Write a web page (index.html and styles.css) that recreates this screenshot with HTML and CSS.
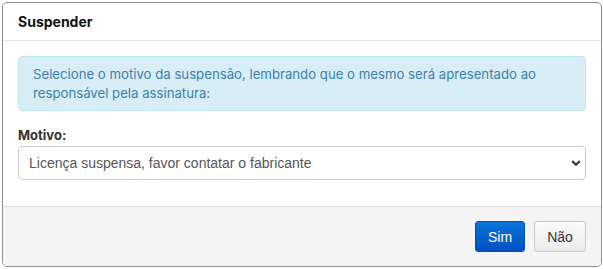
FILE: index.html
```html
<!DOCTYPE html>
<html lang="pt">
<head>
<meta charset="utf-8">
<link rel="stylesheet" href="styles.css">
</head>
<body>
<div class="modal">
  <div class="modal-header">
    <h4 class="modal-title">Suspender</h4>
  </div>
  <div class="modal-body">
    <div class="alert">Selecione o motivo da suspensão, lembrando que o mesmo será apresentado ao responsável pela assinatura:</div>
    <label class="label" for="motivo">Motivo:</label>
    <div class="select-wrap">
      <select id="motivo" class="select">
        <option>Licença suspensa, favor contatar o fabricante</option>
      </select>
      <svg class="chevron" width="10" height="8" viewBox="0 0 10 8"><path d="M1.2 2 L5 5.8 L8.8 2" fill="none" stroke="#333" stroke-width="2"/></svg>
    </div>
  </div>
  <div class="modal-footer">
    <button class="btn btn-primary">Sim</button>
    <button class="btn btn-default">Não</button>
  </div>
</div>
</body>
</html>
```
FILE: styles.css
```css
html, body { margin: 0; padding: 0; background: #fff; }
body { font-family: "Inter", "Noto Sans", sans-serif; }
.modal {
  margin: 2px;
  width: 600px;
  height: 265px;
  border: 1px solid #8f8f8f;
  border-radius: 5px;
  box-sizing: border-box;
  display: flex;
  flex-direction: column;
  overflow: hidden;
}
.modal-header {
  height: 37px;
  border-bottom: 1px solid #e8e8e8;
  padding: 0 15px;
  display: flex;
  align-items: center;
}
.modal-title {
  margin: 0;
  font-size: 14px;
  font-weight: 700;
  color: #111;
}
.modal-body {
  padding: 15px 15px 0;
  flex: 1;
}
.alert {
  background: #d9edf7;
  border: 1px solid #bce8f1;
  border-radius: 4px;
  color: #3a81ab;
  font-size: 13.2px;
  line-height: 19px;
  padding: 8px 14px 8px 14px;
  height: 55px;
  box-sizing: border-box;
}
.label {
  display: block;
  margin-top: 16px;
  font-weight: 700;
  font-size: 13px;
  color: #333;
  line-height: 16px;
}
.select-wrap {
  position: relative;
  margin-top: 3px;
}
.select {
  appearance: none;
  -webkit-appearance: none;
  width: 100%;
  height: 34px;
  border: 1px solid #ccc;
  border-radius: 4px;
  background: #fff;
  font-family: "Liberation Sans", Arial, sans-serif;
  font-size: 14px;
  color: #555;
  padding: 0 10px;
  box-sizing: border-box;
}
.chevron {
  position: absolute;
  right: 5px;
  top: 13px;
}
.modal-footer {
  height: 59px;
  background: #f4f4f4;
  border-top: 1px solid #dedede;
  display: flex;
  align-items: center;
  justify-content: flex-end;
  gap: 9px;
  padding: 0 15px;
}
.btn {
  height: 31px;
  border-radius: 3px;
  font-family: "Liberation Sans", Arial, sans-serif;
  font-size: 14px;
  padding: 0 12px;
  box-sizing: border-box;
}
.btn-primary {
  width: 50px;
  background: linear-gradient(#0a74d6, #0050c2);
  border: 1px solid #0050b5;
  color: #fff;
}
.btn-default {
  width: 52px;
  background: linear-gradient(#fafafa, #ececec);
  border: 1px solid #c8c8c8;
  color: #333;
}
```
